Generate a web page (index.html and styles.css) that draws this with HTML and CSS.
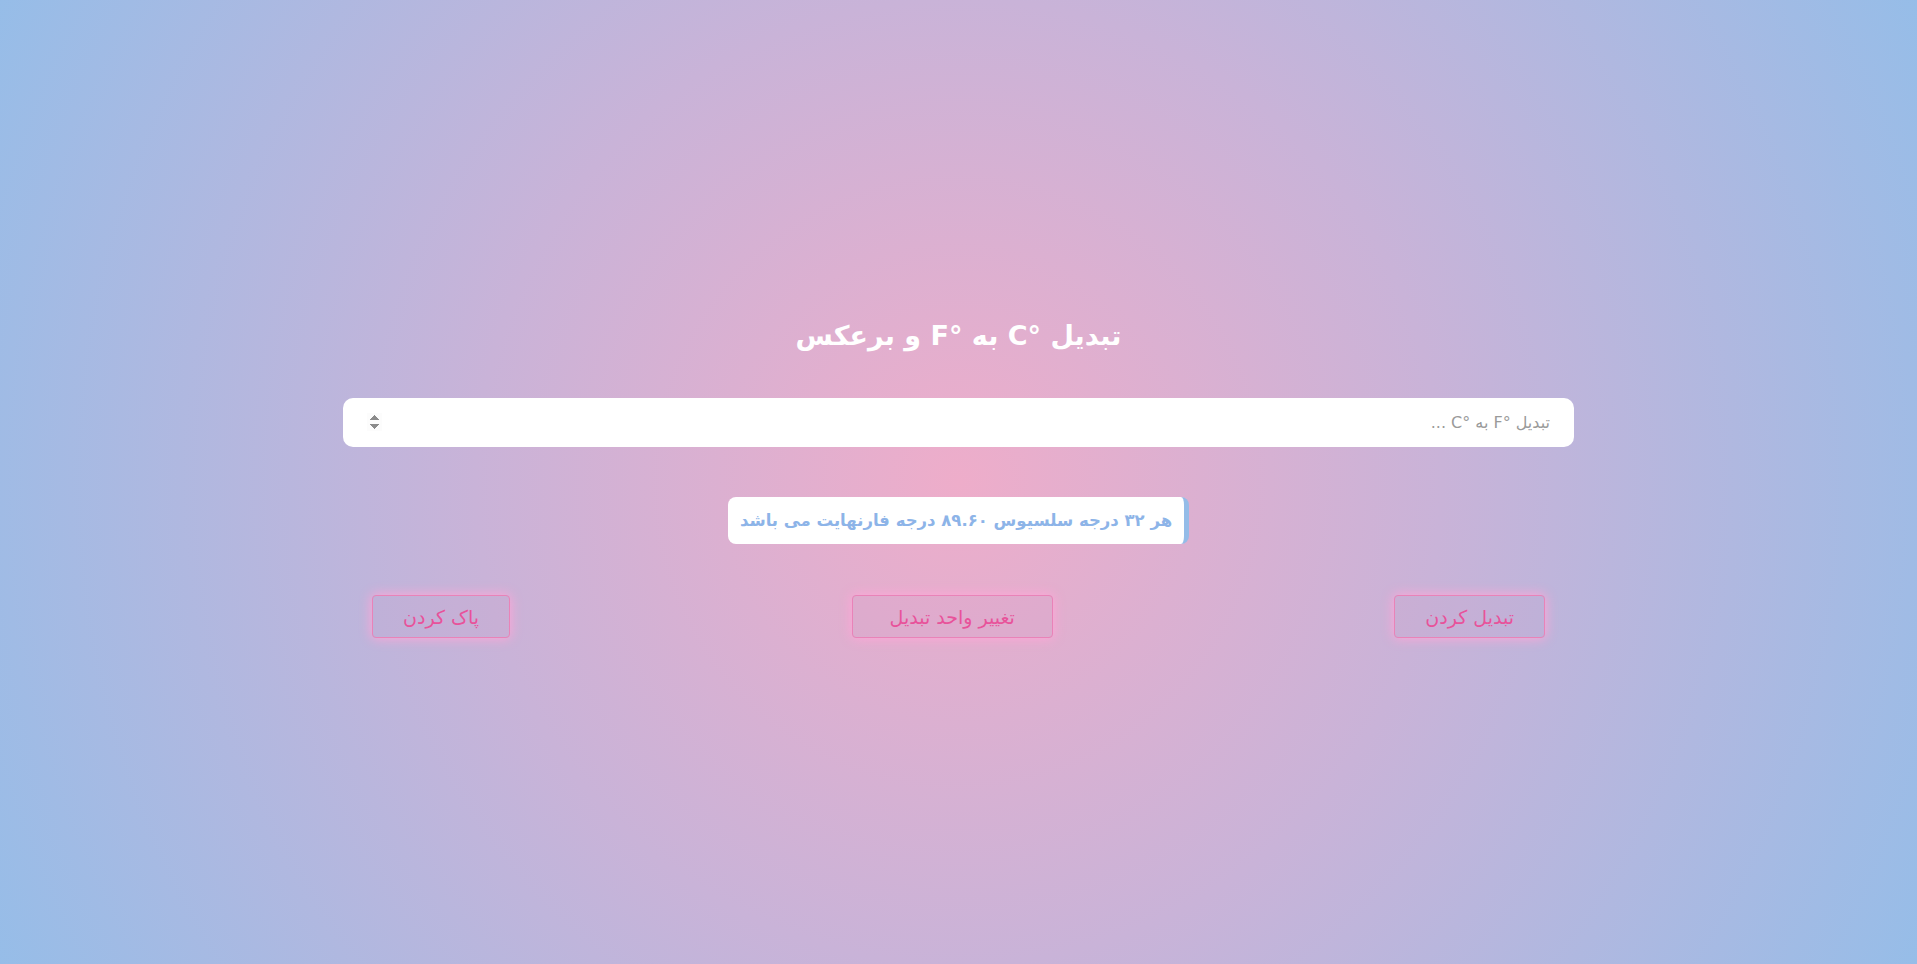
FILE: index.html
```html
<!DOCTYPE html>
<html lang="fa" dir="rtl">
<head>
<meta charset="utf-8">
<title>تبدیل دما</title>
<link rel="stylesheet" href="styles.css">
</head>
<body>
<main class="container">
  <h1 class="title">تبدیل °C به °F و برعکس</h1>
  <input class="field" type="number" placeholder="تبدیل °F به °C ..." autofocus>
  <div class="result">هر ۳۲ درجه سلسیوس ۸۹.۶۰ درجه فارنهایت می باشد</div>
  <div class="actions">
    <button class="btn">تبدیل کردن</button>
    <button class="btn btn-wide">تغییر واحد تبدیل</button>
    <button class="btn">پاک کردن</button>
  </div>
</main>
</body>
</html>
```
FILE: styles.css
```css
* { box-sizing: border-box; }
html, body { height: 100%; }
body {
  margin: 0;
  font-family: "DejaVu Sans", "Noto Sans", sans-serif;
  background: radial-gradient(circle farthest-corner at 50% 50%, #eeadca 0%, #c9b3d8 45%, #96bde8 100%);
  display: flex;
  align-items: center;
  justify-content: center;
}
.container {
  width: 1231px;
  margin-bottom: 8px;
  display: flex;
  flex-direction: column;
  align-items: center;
}
.title {
  margin: 0 0 44px;
  color: #fff;
  font-size: 27px;
  font-weight: bold;
  line-height: 36px;
}
.field {
  width: 100%;
  height: 49px;
  border: none;
  border-radius: 10px;
  background: #fff;
  padding: 0 24px;
  font-family: inherit;
  font-size: 16px;
  color: #333;
  outline: none;
}
.field::placeholder { color: #9a9a9a; }
.result {
  margin-top: 50px;
  background: #fff;
  border-right: 5px solid #94bce8;
  border-radius: 8px;
  padding: 0 12px;
  height: 47px;
  line-height: 47px;
  color: #8db4e8;
  font-size: 16.5px;
  font-weight: bold;
}
.actions {
  margin-top: 51px;
  width: 100%;
  padding: 0 29px;
  display: flex;
  justify-content: space-between;
}
.btn {
  height: 43px;
  padding: 0 30px;
  background: rgba(200, 150, 200, 0.12);
  border: 1px solid #e983b8;
  border-radius: 4px;
  box-shadow: 0 0 12px 1px rgba(255, 165, 215, 0.95);
  color: #e8529a;
  font-family: inherit;
  font-size: 19px;
  cursor: pointer;
}
.btn-wide { padding: 0 37px; }
```
